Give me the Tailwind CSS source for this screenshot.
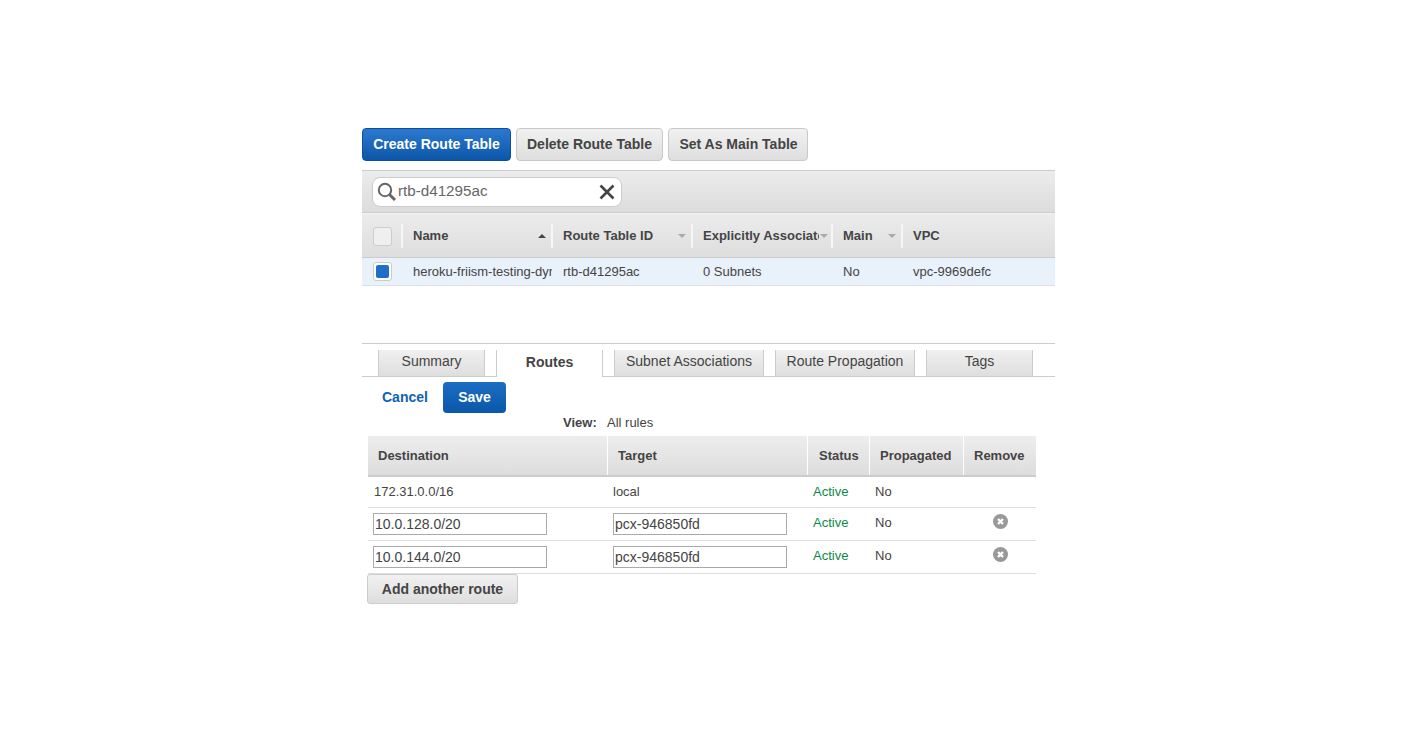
<!DOCTYPE html>
<html><head><meta charset="utf-8"><script src="https://cdn.jsdelivr.net/npm/@tailwindcss/browser@4"></script></head>
<body class="bg-white">
<div class="w-[1416px] h-[730px] overflow-hidden pt-[128px] pl-[362px] font-['Liberation_Sans',Arial,sans-serif] text-[#444] text-[13px]">
<div class="w-[693px]">
  <div class="flex gap-[5px] h-[33px]">
    <button class="w-[149px] h-[33px] rounded-[4px] border border-[#0d4f9b] bg-gradient-to-b from-[#2b79cf] to-[#0b57a8] text-white font-bold text-[14px]">Create Route Table</button>
    <button class="w-[147px] h-[33px] rounded-[4px] border border-[#c9c9c9] bg-gradient-to-b from-[#f1f1f1] to-[#dedede] text-[#444] font-bold text-[14px]">Delete Route Table</button>
    <button class="w-[140px] h-[33px] rounded-[4px] border border-[#c9c9c9] bg-gradient-to-b from-[#f1f1f1] to-[#dedede] text-[#444] font-bold text-[14px] pl-px">Set As Main Table</button>
  </div>
  <div class="mt-[9px] h-[43px] border-t border-[#ccc] border-b bg-gradient-to-b from-[#ececec] to-[#dcdcdc] pl-[10px] pt-[6px]">
    <div class="w-[250px] h-[30px] rounded-[8px] border border-[#ccc] bg-white flex items-center pl-[4px] pr-[5px]">
      <svg width="20" height="20" viewBox="0 0 20 20" fill="none" class="shrink-0"><circle cx="8" cy="8" r="6.2" stroke="#666" stroke-width="2"/><path d="M12.5 12.5 18 18" stroke="#666" stroke-width="3"/></svg>
      <span class="text-[15.2px] text-[#666] flex-1 pb-px ml-px">rtb-d41295ac</span>
      <svg width="18" height="18" viewBox="0 0 18 18" fill="none" class="shrink-0"><path d="M2.5 2.5 15.5 15.5M15.5 2.5 2.5 15.5" stroke="#444" stroke-width="2.6"/></svg>
    </div>
  </div>
  <div class="h-[45px] border-t border-[#f4f4f4] border-b-0 bg-gradient-to-b from-[#ececec] to-[#dddddd] flex items-center font-bold text-[13px] shadow-[inset_0_-1px_0_#ccc]">
    <div class="w-[39px] pl-[11px] h-[34px] flex items-center"><span class="w-[19px] h-[19px] rounded-[3px] border border-[#ccc] bg-[#efefef]"></span></div>
    <div class="w-[150px] h-[24px] border-l-2 border-[#f6f6f6] pl-[10px] pr-[5px] flex items-center justify-between"><span>Name</span><span class="w-0 h-0 border-x-[4px] border-x-transparent border-b-[4px] border-b-[#444]"></span></div>
    <div class="w-[140px] h-[24px] border-l-2 border-[#f6f6f6] pl-[10px] pr-[5px] flex items-center justify-between"><span>Route Table ID</span><span class="w-0 h-0 border-x-[4px] border-x-transparent border-t-[4px] border-t-[#aaa]"></span></div>
    <div class="w-[140px] h-[24px] border-l-2 border-[#f6f6f6] pl-[10px] pr-[3px] flex items-center justify-between"><span class="w-[116px] overflow-hidden whitespace-nowrap">Explicitly Associated</span><span class="w-0 h-0 border-x-[4px] border-x-transparent border-t-[4px] border-t-[#aaa]"></span></div>
    <div class="w-[70px] h-[24px] border-l-2 border-[#f6f6f6] pl-[10px] pr-[5px] flex items-center justify-between"><span>Main</span><span class="w-0 h-0 border-x-[4px] border-x-transparent border-t-[4px] border-t-[#aaa]"></span></div>
    <div class="h-[24px] border-l-2 border-[#f6f6f6] pl-[10px] flex items-center"><span>VPC</span></div>
  </div>
  <div class="h-[28px] bg-[#e9f1fb] border-b border-[#dcdfe3] flex items-center text-[13px]">
    <div class="w-[40px] pl-[11px] flex items-center"><span class="w-[19px] h-[19px] rounded-[3px] border border-[#ccc] bg-white flex items-center justify-center"><span class="w-[13px] h-[13px] rounded-[2px] bg-[#1f6fc9]"></span></span></div>
    <div class="w-[150px] pl-[11px] overflow-hidden whitespace-nowrap">heroku-friism-testing-dyn</div>
    <div class="w-[140px] pl-[11px]">rtb-d41295ac</div>
    <div class="w-[140px] pl-[11px]">0 Subnets</div>
    <div class="w-[70px] pl-[11px]">No</div>
    <div class="pl-[11px]">vpc-9969defc</div>
  </div>
  <div class="mt-[57px] h-[34px] border-t border-[#ccc] border-b border-b-[#ccc] flex pl-[16px] gap-[11px] pt-[6px] text-[14px]">
    <div class="w-[107px] h-[26px] bg-gradient-to-b from-[#f0f0f0] to-[#dedede] border-x border-[#ccc] flex items-center justify-center pb-[4px]">Summary</div>
    <div class="w-[107px] h-[27px] bg-white border-x border-[#ccc] flex items-center justify-center font-bold pb-[2px]">Routes</div>
    <div class="w-[150px] h-[26px] bg-gradient-to-b from-[#f0f0f0] to-[#dedede] border-x border-[#ccc] flex items-center justify-center pb-[4px]">Subnet Associations</div>
    <div class="w-[140px] h-[26px] bg-gradient-to-b from-[#f0f0f0] to-[#dedede] border-x border-[#ccc] flex items-center justify-center pb-[4px]">Route Propagation</div>
    <div class="w-[107px] h-[26px] bg-gradient-to-b from-[#f0f0f0] to-[#dedede] border-x border-[#ccc] flex items-center justify-center pb-[4px]">Tags</div>
  </div>
  <div class="h-[37px] flex items-start pt-[5px] pl-[20px]">
    <span class="text-[#0f62b5] font-bold text-[14px] mt-[5px] w-[61px]">Cancel</span>
    <button class="w-[63px] h-[31px] rounded-[4px] bg-gradient-to-b from-[#1a6dc4] to-[#0b57a8] text-white font-bold text-[14px]">Save</button>
  </div>
  <div class="h-[22px] flex items-center pl-[201px] text-[13px] pb-[5px]"><b class="w-[44px]">View:</b><span>All rules</span></div>
  <div class="ml-[6px] w-[668px]">
    <div class="h-[41px] flex bg-gradient-to-b from-[#ededed] to-[#dddddd] border-b-2 border-[#ccc] font-bold text-[13px] items-stretch">
      <div class="w-[239px] pl-[10px] flex items-center">Destination</div>
      <div class="w-[200px] border-l border-[#fff] pl-[10px] flex items-center">Target</div>
      <div class="w-[62px] border-l border-[#fff] pl-[11px] flex items-center">Status</div>
      <div class="w-[94px] border-l border-[#fff] pl-[10px] flex items-center">Propagated</div>
      <div class="w-[73px] border-l border-[#fff] pl-[10px] flex items-center">Remove</div>
    </div>
    <div class="h-[31px] flex items-center border-b border-[#ddd] text-[13px] pb-px">
      <div class="w-[239px] pl-[6px]">172.31.0.0/16</div><div class="w-[200px] pl-[6px]">local</div><div class="w-[62px] pl-[6px] text-[#0a8a4a]">Active</div><div class="pl-[6px]">No</div>
    </div>
    <div class="h-[33px] flex items-center border-b border-[#ddd] text-[13px]">
      <div class="w-[239px] pl-[5px]"><input value="10.0.128.0/20" class="w-[174px] h-[22px] border border-[#aaa] px-[1px] text-[14px] text-[#444] outline-none"></div>
      <div class="w-[200px] pl-[6px]"><input value="pcx-946850fd" class="w-[174px] h-[22px] border border-[#aaa] px-[1px] text-[14px] text-[#444] outline-none"></div>
      <div class="w-[62px] pl-[6px] pb-[3px] text-[#0a8a4a]">Active</div><div class="w-[94px] pl-[6px] pb-[3px]">No</div>
      <div class="pl-[30px] pb-[5px]"><svg width="15" height="15" viewBox="0 0 15 15" class="block"><circle cx="7.5" cy="7.5" r="7.5" fill="#999"/><path d="M5 5l5 5M10 5l-5 5" stroke="#fff" stroke-width="2.4"/></svg></div>
    </div>
    <div class="h-[33px] flex items-center border-b border-[#ddd] text-[13px]">
      <div class="w-[239px] pl-[5px]"><input value="10.0.144.0/20" class="w-[174px] h-[22px] border border-[#aaa] px-[1px] text-[14px] text-[#444] outline-none"></div>
      <div class="w-[200px] pl-[6px]"><input value="pcx-946850fd" class="w-[174px] h-[22px] border border-[#aaa] px-[1px] text-[14px] text-[#444] outline-none"></div>
      <div class="w-[62px] pl-[6px] pb-[3px] text-[#0a8a4a]">Active</div><div class="w-[94px] pl-[6px] pb-[3px]">No</div>
      <div class="pl-[30px] pb-[5px]"><svg width="15" height="15" viewBox="0 0 15 15" class="block"><circle cx="7.5" cy="7.5" r="7.5" fill="#999"/><path d="M5 5l5 5M10 5l-5 5" stroke="#fff" stroke-width="2.4"/></svg></div>
    </div>
    <button class="-ml-px w-[151px] h-[30px] rounded-[3px] border border-[#ccc] bg-gradient-to-b from-[#f1f1f1] to-[#dedede] font-bold text-[14px] text-[#444]">Add another route</button>
  </div>
</div>
</div>
</body></html>
